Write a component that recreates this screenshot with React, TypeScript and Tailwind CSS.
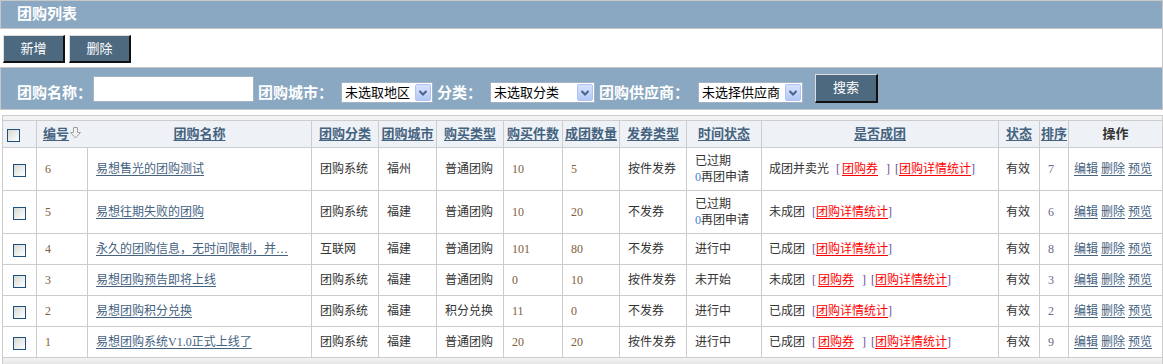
import React from 'react';

type Row = {
  id: string;
  name: string;
  cat: string;
  city: string;
  buy: string;
  qty: string;
  done: string;
  ticket: string;
  expired: boolean;
  time: string;
  group: string;
  coupon: boolean;
  status: string;
  sort: string;
};

const rows: Row[] = [
  { id: '6', name: '易想售光的团购测试', cat: '团购系统', city: '福州', buy: '普通团购', qty: '10', done: '5', ticket: '按件发券', expired: true, time: '', group: '成团并卖光', coupon: true, status: '有效', sort: '7' },
  { id: '5', name: '易想往期失败的团购', cat: '团购系统', city: '福建', buy: '普通团购', qty: '10', done: '20', ticket: '不发券', expired: true, time: '', group: '未成团', coupon: false, status: '有效', sort: '6' },
  { id: '4', name: '永久的团购信息，无时间限制，并…', cat: '互联网', city: '福建', buy: '普通团购', qty: '101', done: '80', ticket: '不发券', expired: false, time: '进行中', group: '已成团', coupon: false, status: '有效', sort: '8' },
  { id: '3', name: '易想团购预告即将上线', cat: '团购系统', city: '福建', buy: '普通团购', qty: '0', done: '10', ticket: '按件发券', expired: false, time: '未开始', group: '未成团', coupon: true, status: '有效', sort: '3' },
  { id: '2', name: '易想团购积分兑换', cat: '团购系统', city: '福建', buy: '积分兑换', qty: '11', done: '0', ticket: '不发券', expired: false, time: '进行中', group: '已成团', coupon: false, status: '有效', sort: '2' },
  { id: '1', name: '易想团购系统V1.0正式上线了', cat: '团购系统', city: '福建', buy: '普通团购', qty: '20', done: '20', ticket: '按件发券', expired: false, time: '进行中', group: '已成团', coupon: true, status: '有效', sort: '9' },
];

const widths = [34, 51, 224, 67, 58, 67, 59, 57, 67, 75, 237, 41, 29, 93];

const link = 'text-[#45627f] underline underline-offset-2';
const red = 'text-[#ff0000] underline underline-offset-2';
const brk = 'text-[#6b4a9c]';
const num = 'text-[#806040]';
const th = 'border-t border-b border-[#cccccc] bg-[#eef2f6] h-[28px] p-0 text-[13px] font-bold align-middle';
const td = 'border-b border-[#cccccc] p-0 align-middle leading-[16px]';

function CheckBox() {
  return (
    <span className="inline-block w-[13px] h-[13px] border border-[#1c5180] bg-linear-to-br from-[#d8d8d2] to-white align-middle" />
  );
}

function Btn({ children, className = '' }: { children: React.ReactNode; className?: string }) {
  return (
    <div
      className={
        'bg-[#4d697f] border-t border-l border-[#dddddd] border-r-2 border-b-2 border-r-[#111111] border-b-[#111111] text-white text-[13px] flex justify-center pt-[3px] ' +
        className
      }
    >
      {children}
    </div>
  );
}

function Select({ text, w }: { text: string; w: string }) {
  return (
    <div className={'mt-[14px] h-[21px] bg-white border border-[#a5b4c4] flex items-center justify-between ' + w}>
      <span className="pl-[3px] text-[13px] text-black leading-[19px]">{text}</span>
      <span className="w-[16px] h-[17px] mr-[1px] rounded-[2px] border border-[#b2c5f2] bg-linear-to-b from-[#d6e2fe] to-[#b4c8f7] flex items-center justify-center">
        <svg width="10" height="8" viewBox="0 0 10 8">
          <path d="M1.5 2 L5 5.5 L8.5 2" fill="none" stroke="#4d6185" strokeWidth="2" />
        </svg>
      </span>
    </div>
  );
}

function Label({ children, w }: { children: React.ReactNode; w: string }) {
  return <div className={'mt-[18px] text-[15px] leading-[15px] font-bold text-white whitespace-nowrap ' + w}>{children}</div>;
}

function SortArrow() {
  return (
    <svg width="11" height="12" viewBox="0 0 11 12" className="inline-block align-[-1px] ml-[1px]">
      <path d="M3.5 0.5 H7.5 V5.5 H10.5 L5.5 11 L0.5 5.5 H3.5 Z" fill="#f2f2f2" stroke="#a0a0a0" />
    </svg>
  );
}

function Group({ r }: { r: Row }) {
  return (
    <span className="whitespace-nowrap">
      <span>{r.group}</span>
      <span className={'ml-[7px] ' + brk}>[</span>
      {r.coupon ? (
        <>
          <a className={'ml-[2px] ' + red}>团购券</a>
          <span className={'ml-[8px] ' + brk}>]</span>
          <span className={'ml-[5px] ' + brk}>[</span>
        </>
      ) : null}
      <a className={red}>团购详情统计</a>
      <span className={brk}>]</span>
    </span>
  );
}

export default function App() {
  return (
    <div className="w-[1163px] h-[364px] overflow-hidden bg-white text-[12px] text-[#333333] font-['Liberation_Serif','Noto_Sans_CJK_SC',serif]">
      {/* 标题 */}
      <div className="h-[29px] border border-[#c8c8c8] bg-[#8aa8c1] pl-[16px] flex items-center text-[15px] font-bold text-white">
        团购列表
      </div>

      {/* 操作按钮 */}
      <div className="h-[38px] border-r border-[#c8c8c8] flex items-start pt-[6px] pl-[3px] gap-[4px]">
        <Btn className="w-[62px] h-[28px]">新增</Btn>
        <Btn className="w-[62px] h-[28px]">删除</Btn>
      </div>

      {/* 搜索 */}
      <div className="h-[43px] border border-[#c8c8c8] bg-[#8aa8c1] flex items-start pl-[16px]">
        <Label w="w-[76px]">团购名称：</Label>
        <div className="mt-[8px] w-[161px] h-[26px] bg-white border border-[#a5b4c4]" />
        <Label w="ml-[4px] w-[83px]">团购城市：</Label>
        <Select text="未选取地区" w="w-[92px]" />
        <Label w="ml-[4px] w-[53px]">分类：</Label>
        <Select text="未选取分类" w="w-[105px]" />
        <Label w="ml-[4px] w-[99px]">团购供应商：</Label>
        <Select text="未选择供应商" w="w-[105px]" />
        <Btn className="ml-[12px] mt-[6px] w-[63px] h-[29px]">搜索</Btn>
      </div>

      {/* 列表 */}
      <div className="mt-[5px] ml-[2px] w-[1161px] border-t border-x border-[#cccccc]">
        <div className="h-[4px] bg-[#f3f3f3]" />
        <table className="w-[1159px] table-fixed border-separate border-spacing-0">
          <colgroup>
            {widths.map((w, i) => (
              <col key={i} style={{ width: w }} />
            ))}
          </colgroup>
          <thead>
            <tr>
              <th className={th + ' border-r text-left pl-[4px]'}>
                <CheckBox />
              </th>
              <th className={th + ' text-left pl-[6px]'}>
                <a className={link}>编号</a>
                <SortArrow />
              </th>
              {['团购名称', '团购分类', '团购城市', '购买类型', '购买件数', '成团数量', '发券类型', '时间状态', '是否成团', '状态', '排序'].map((h) => (
                <th key={h} className={th + ' border-r text-center whitespace-nowrap'}>
                  <a className={link}>{h}</a>
                </th>
              ))}
              <th className={th + ' text-center text-[#333333]'}>操作</th>
            </tr>
          </thead>
          <tbody>
            {rows.map((r) => (
              <tr key={r.id} className={r.expired ? 'h-[43px]' : 'h-[31px]'}>
                <td className={td + ' border-r text-center'}>
                  <CheckBox />
                </td>
                <td className={td + ' border-r pl-[8px] ' + num}>{r.id}</td>
                <td className={td + ' border-r pl-[8px] whitespace-nowrap'}>
                  <a className={link}>{r.name}</a>
                </td>
                <td className={td + ' border-r pl-[8px]'}>{r.cat}</td>
                <td className={td + ' border-r pl-[8px]'}>{r.city}</td>
                <td className={td + ' border-r pl-[8px]'}>{r.buy}</td>
                <td className={td + ' border-r pl-[8px] ' + num}>{r.qty}</td>
                <td className={td + ' border-r pl-[8px] ' + num}>{r.done}</td>
                <td className={td + ' border-r pl-[8px]'}>{r.ticket}</td>
                <td className={td + ' border-r pl-[8px]'}>
                  {r.expired ? (
                    <>
                      <div>已过期</div>
                      <div>
                        <span className="text-[#3c7fd0]">0</span>再团申请
                      </div>
                    </>
                  ) : (
                    r.time
                  )}
                </td>
                <td className={td + ' border-r pl-[7px]'}>
                  <Group r={r} />
                </td>
                <td className={td + ' border-r pl-[7px]'}>{r.status}</td>
                <td className={td + ' border-r pl-[8px] text-[#6a6a8a]'}>{r.sort}</td>
                <td className={td + ' pl-[5px] whitespace-nowrap'}>
                  <a className={link}>编辑</a> <a className={link}>删除</a> <a className={link}>预览</a>
                </td>
              </tr>
            ))}
          </tbody>
        </table>
        <div className="h-[7px] bg-linear-to-b from-[#f4f4f4] to-[#e4e4e4]" />
      </div>
    </div>
  );
}
